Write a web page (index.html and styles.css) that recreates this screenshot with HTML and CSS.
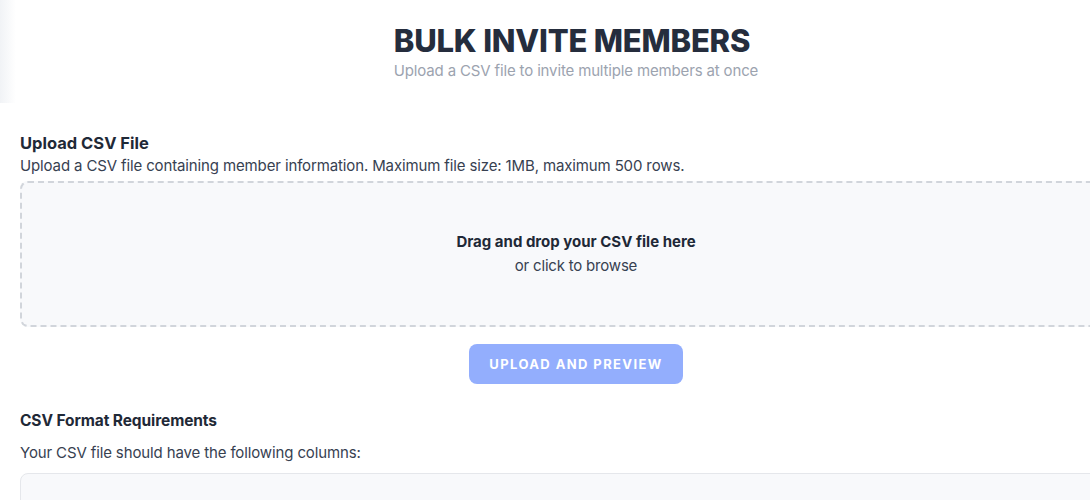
FILE: index.html
```html
<!DOCTYPE html>
<html lang="en">
<head>
    <meta charset="UTF-8">
    <meta name="viewport" content="width=device-width, initial-scale=1.0">
    <title>Bulk Invite Members</title>
    <link rel="stylesheet" href="styles.css">
</head>
<body>
    <div class="page">
        <!-- page header -->
        <div class="header">
            <h1>BULK INVITE MEMBERS</h1>
            <p class="subtitle">Upload a CSV file to invite multiple members at once</p>
        </div>

        <div class="panel">
            <!-- upload section -->
            <h2>Upload CSV File</h2>
            <p class="hint">Upload a CSV file containing member information. Maximum file size: 1MB, maximum 500 rows.</p>

            <div class="dropzone">
                <div class="drop-title">Drag and drop your CSV file here</div>
                <div class="drop-sub">or click to browse</div>
            </div>

            <div class="actions">
                <button class="btn" disabled>Upload and Preview</button>
            </div>

            <!-- format requirements -->
            <h3>CSV Format Requirements</h3>
            <p class="hint">Your CSV file should have the following columns:</p>
            <div class="columns-box"></div>
        </div>
    </div>
</body>
</html>
```

FILE: styles.css
```css
body {
    margin: 0;
    font-family: 'Inter', 'Noto Sans', sans-serif;
    background-color: #fff;
    color: #1f2937;
    overflow: hidden;
}
.page {
    width: 1152px;
}
.header {
    width: 1152px;
    height: 103px;
    text-align: center;
    background: linear-gradient(to right, #f1f3f6, #fff 16px);
    padding-top: 22px;
    box-sizing: border-box;
}
.header h1 {
    margin: 0 8px 0 0;
    font-size: 31px;
    font-weight: 800;
    line-height: 38px;
    color: #252d3d;
    letter-spacing: -0.2px;
}
.subtitle {
    margin: 1px 0 0;
    font-size: 15px;
    color: #9ca3af;
    letter-spacing: -0.15px;
}
.panel {
    background-color: #fff;
    border-top-left-radius: 10px;
    padding: 28px 20px 0;
}
.panel h2 {
    margin: 0;
    font-size: 16.5px;
    font-weight: 700;
    color: #1f2937;
    line-height: 24px;
}
.hint {
    margin: 0;
    font-size: 15px;
    line-height: 22px;
    color: #374151;
    letter-spacing: -0.13px;
}
.dropzone {
    margin-top: 4px;
    height: 146px;
    border: 2px dashed #d1d5db;
    border-radius: 8px;
    background-color: #f8f9fb;
    display: flex;
    flex-direction: column;
    justify-content: center;
    align-items: center;
    box-sizing: border-box;
}
.drop-title {
    font-size: 15px;
    font-weight: 700;
    color: #1f2937;
    line-height: 24px;
}
.drop-sub {
    font-size: 15px;
    color: #374151;
    line-height: 24px;
    letter-spacing: -0.2px;
}
.actions {
    display: flex;
    justify-content: center;
    margin-top: 17px;
}
.btn {
    background-color: #93aefd;
    color: #fff;
    font-family: inherit;
    font-size: 13px;
    font-weight: 700;
    letter-spacing: 1.4px;
    text-transform: uppercase;
    border: none;
    border-radius: 8px;
    width: 214px;
    height: 40px;
}
.panel h3 {
    margin: 25px 0 0;
    font-size: 15.5px;
    font-weight: 700;
    line-height: 24px;
    color: #1f2937;
    letter-spacing: -0.1px;
}
.panel h3 + .hint {
    margin-top: 9px;
}
.columns-box {
    margin-top: 9px;
    height: 60px;
    border: 1px solid #e5e7eb;
    border-radius: 8px;
    background-color: #f8f9fb;
}
```
